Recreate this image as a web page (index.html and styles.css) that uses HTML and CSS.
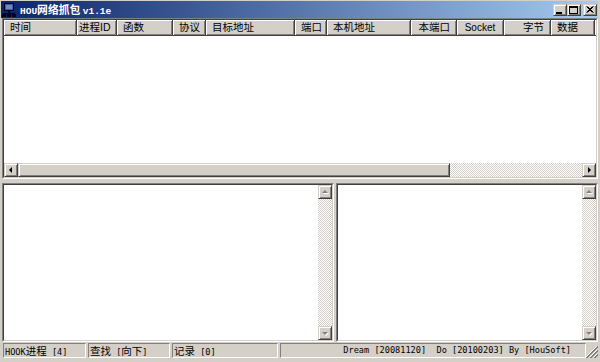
FILE: index.html
```html
<!DOCTYPE html>
<html>
<head>
<meta charset="utf-8">
<title>HOU网络抓包 v1.1e</title>
<link rel="stylesheet" href="styles.css">
</head>
<body>
<div class="window">
  <div class="titlebar">
    <svg class="app-icon" width="14" height="14" viewBox="0 0 14 14">
      <rect x="2.5" y="0.5" width="9" height="7" fill="#3a5aa8" stroke="#000020"/>
      <rect x="4" y="2" width="6" height="4" fill="#6a8ad0"/>
      <rect x="6" y="8" width="2" height="2" fill="#000020"/>
      <rect x="1" y="10" width="12" height="1" fill="#000020"/>
      <rect x="0" y="11" width="4" height="3" fill="#000020"/>
      <rect x="10" y="11" width="4" height="3" fill="#000020"/>
      <rect x="5" y="11" width="4" height="3" fill="#000020"/>
    </svg>
    <span class="title"><span class="t-mono">HOU</span>网络抓包 <span class="t-mono">v1.1e</span></span>
    <div class="caption">
      <div class="cbtn raised">
        <svg width="12" height="10" viewBox="0 0 12 10"><rect x="2" y="7" width="6" height="2" fill="#000"/></svg>
      </div>
      <div class="cbtn raised">
        <svg width="12" height="10" viewBox="0 0 12 10"><rect x="1.5" y="1.5" width="8" height="7" fill="none" stroke="#000"/><rect x="1" y="1" width="9" height="2" fill="#000"/></svg>
      </div>
      <div class="cbtn raised close">
        <svg width="12" height="10" viewBox="0 0 12 10"><path d="M2.5 1.5 L8.5 7.5 M3.5 1.5 L9.5 7.5 M8.5 1.5 L2.5 7.5 M9.5 1.5 L3.5 7.5" stroke="#000" stroke-width="1" fill="none"/></svg>
      </div>
    </div>
  </div>

  <div class="listview sunken">
    <div class="sunken-in list-in">
      <div class="header">
        <div class="hcell">时间</div>
        <div class="hcell right">进程ID</div>
        <div class="hcell">函数</div>
        <div class="hcell">协议</div>
        <div class="hcell">目标地址</div>
        <div class="hcell">端口</div>
        <div class="hcell">本机地址</div>
        <div class="hcell right">本端口</div>
        <div class="hcell center">Socket</div>
        <div class="hcell right">字节</div>
        <div class="hcell">数据</div>
        <div class="hcell filler"></div>
      </div>
      <div class="list-body"></div>
      <div class="hscroll">
        <div class="sbtn raised">
          <svg width="12" height="12" viewBox="0 0 12 12"><polygon points="4,6 7,3 7,9" fill="#000"/></svg>
        </div>
        <div class="thumb raised"></div>
        <div class="track"></div>
        <div class="sbtn raised">
          <svg width="12" height="12" viewBox="0 0 12 12"><polygon points="8,6 5,3 5,9" fill="#000"/></svg>
        </div>
      </div>
    </div>
  </div>

  <div class="panes">
    <div class="pane left-pane sunken">
      <div class="sunken-in pane-in">
        <div class="pane-body"></div>
        <div class="vscroll">
          <div class="sbtn raised">
            <svg width="12" height="12" viewBox="0 0 12 12"><polygon points="7,5 10,8 4,8" fill="#fff"/><polygon points="6,4 9,7 3,7" fill="#808080"/></svg>
          </div>
          <div class="track"></div>
          <div class="sbtn raised">
            <svg width="12" height="12" viewBox="0 0 12 12"><polygon points="7,9 10,6 4,6" fill="#fff"/><polygon points="6,8 9,5 3,5" fill="#808080"/></svg>
          </div>
        </div>
      </div>
    </div>
    <div class="pane right-pane sunken">
      <div class="sunken-in pane-in">
        <div class="pane-body"></div>
        <div class="vscroll">
          <div class="sbtn raised">
            <svg width="12" height="12" viewBox="0 0 12 12"><polygon points="7,5 10,8 4,8" fill="#fff"/><polygon points="6,4 9,7 3,7" fill="#808080"/></svg>
          </div>
          <div class="track"></div>
          <div class="sbtn raised">
            <svg width="12" height="12" viewBox="0 0 12 12"><polygon points="7,9 10,6 4,6" fill="#fff"/><polygon points="6,8 9,5 3,5" fill="#808080"/></svg>
          </div>
        </div>
      </div>
    </div>
  </div>

  <div class="statusbar">
    <div class="sp sp1">HOOK<span class="cn">进程</span> [4]</div>
    <div class="sp sp2"><span class="cn">查找</span> [<span class="cn">向下</span>]</div>
    <div class="sp sp3"><span class="cn">记录</span> [0]</div>
    <div class="sp sp4">Dream [20081120]  Do [20100203] By [HouSoft]</div>
    <div class="grip">
      <svg width="12" height="12" viewBox="0 0 12 12">
        <path d="M11 0 L0 11" stroke="#fff"/><path d="M12 0 L0 12 M12 1 L1 12" stroke="#808080"/>
        <path d="M11 4 L4 11" stroke="#fff"/><path d="M12 4 L4 12 M12 5 L5 12" stroke="#808080"/>
        <path d="M11 8 L8 11" stroke="#fff"/><path d="M12 8 L8 12 M12 9 L9 12" stroke="#808080"/>
      </svg>
    </div>
  </div>
</div>
</body>
</html>
```

FILE: styles.css
```css
* {
  box-sizing: border-box;
  margin: 0;
  padding: 0;
}

html, body {
  margin: 0;
  background: #d4d0c8;
}

body {
  width: 600px;
  height: 362px;
  overflow: hidden;
}

.window {
  width: 600px;
  height: 362px;
  background: #d4d0c8;
  padding: 1px 2px 0 2px;
  display: flex;
  flex-direction: column;
  font-family: "Liberation Sans", "Noto Sans CJK SC", sans-serif;
  color: #000;
}

/* ---------- title bar ---------- */
.titlebar {
  height: 17px;
  margin-left: -1px;
  padding: 0 1px 0 1px;
  background: linear-gradient(to right, #0a246a, #a6caf0);
  display: flex;
  align-items: center;
  flex: none;
}

.app-icon {
  flex: none;
  display: block;
}

.title {
  margin-left: 4px;
  color: #fff;
  font-family: "Noto Sans CJK SC", sans-serif;
  font-weight: bold;
  font-size: 10.8px;
  line-height: 17px;
  padding-top: 1px;
  white-space: pre;
}

.t-mono {
  font-family: "Liberation Mono", monospace;
  font-size: 9.5px;
  font-weight: bold;
}

.caption {
  margin-left: auto;
  display: flex;
  align-items: center;
}

.raised {
  background: #d4d0c8;
  border: 1px solid;
  border-color: #d4d0c8 #404040 #404040 #d4d0c8;
  box-shadow: inset 1px 1px #fff, inset -1px -1px #808080;
}

.cbtn {
  width: 14px;
  height: 12px;
  display: flex;
  align-items: center;
  justify-content: center;
}

.cbtn svg {
  display: block;
}

.cbtn.close {
  margin-left: 2px;
}

/* ---------- sunken frames ---------- */
.sunken {
  border: 1px solid;
  border-color: #808080 #fff #fff #808080;
}

.sunken-in {
  border: 1px solid;
  border-color: #404040 #d4d0c8 #d4d0c8 #404040;
  height: 100%;
}

/* ---------- list view ---------- */
.listview {
  height: 161px;
  flex: none;
}

.list-in {
  display: flex;
  flex-direction: column;
  background: #fff;
}

.header {
  height: 16px;
  flex: none;
  display: grid;
  grid-template-columns: 73px 40px 56px 33px 89px 32px 84px 46px 47px 47px 44px 1fr;
  background: #d4d0c8;
}

.hcell {
  background: #d4d0c8;
  border-right: 1px solid #404040;
  border-bottom: 1px solid #404040;
  box-shadow: inset 1px 1px #fff, inset -1px -1px #808080;
  font-size: 10.5px;
  line-height: 15px;
  padding: 0 4px 0 6px;
  white-space: nowrap;
  overflow: hidden;
}

.hcell.right {
  text-align: right;
  padding: 0 6px 0 2px;
}

.hcell.center {
  text-align: center;
  padding: 0 2px;
  font-size: 10px;
}

.hcell.filler {
  border-right: none;
  padding: 0;
}

.list-body {
  flex: 1;
  background: #fff;
}

.hscroll {
  height: 14px;
  flex: none;
  display: flex;
}

.sbtn {
  width: 14px;
  height: 14px;
  flex: none;
  display: flex;
  align-items: center;
  justify-content: center;
}

.sbtn svg {
  display: block;
}

.thumb {
  width: 432px;
  flex: none;
}

.track {
  flex: 1;
  background-color: #fff;
  background-image: repeating-conic-gradient(#d4d0c8 0% 25%, #ffffff 0% 50%);
  background-size: 2px 2px;
}

/* ---------- lower panes ---------- */
.panes {
  margin-top: 4px;
  height: 159px;
  flex: none;
  display: flex;
  gap: 2px;
}

.left-pane {
  width: 332px;
  flex: none;
}

.right-pane {
  flex: 1;
}

.pane-in {
  display: flex;
  background: #fff;
}

.pane-body {
  flex: 1;
  background: #fff;
}

.vscroll {
  width: 14px;
  flex: none;
  display: flex;
  flex-direction: column;
}

/* ---------- status bar ---------- */
.statusbar {
  margin-top: 1px;
  margin-left: 1px;
  margin-right: -2px;
  height: 15px;
  flex: none;
  display: flex;
  gap: 2px;
}

.sp {
  border: 1px solid;
  border-color: #808080 #fff #fff #808080;
  font-family: "DejaVu Sans Mono", monospace;
  font-size: 8.6px;
  line-height: 13px;
  padding-left: 1px;
  white-space: pre;
  overflow: hidden;
}

.cn {
  font-family: "Noto Sans CJK SC", sans-serif;
  font-size: 10.5px;
}

.sp1 { width: 83px; flex: none; }
.sp2 { width: 82px; flex: none; }
.sp3 { width: 106px; flex: none; }
.sp4 {
  flex: 1;
  text-align: right;
  padding-right: 14px;
}

.grip {
  width: 14px;
  flex: none;
  margin-left: -2px;
  display: flex;
  align-items: flex-end;
  justify-content: flex-end;
  padding-right: 2px;
}

.grip svg {
  display: block;
}
```
